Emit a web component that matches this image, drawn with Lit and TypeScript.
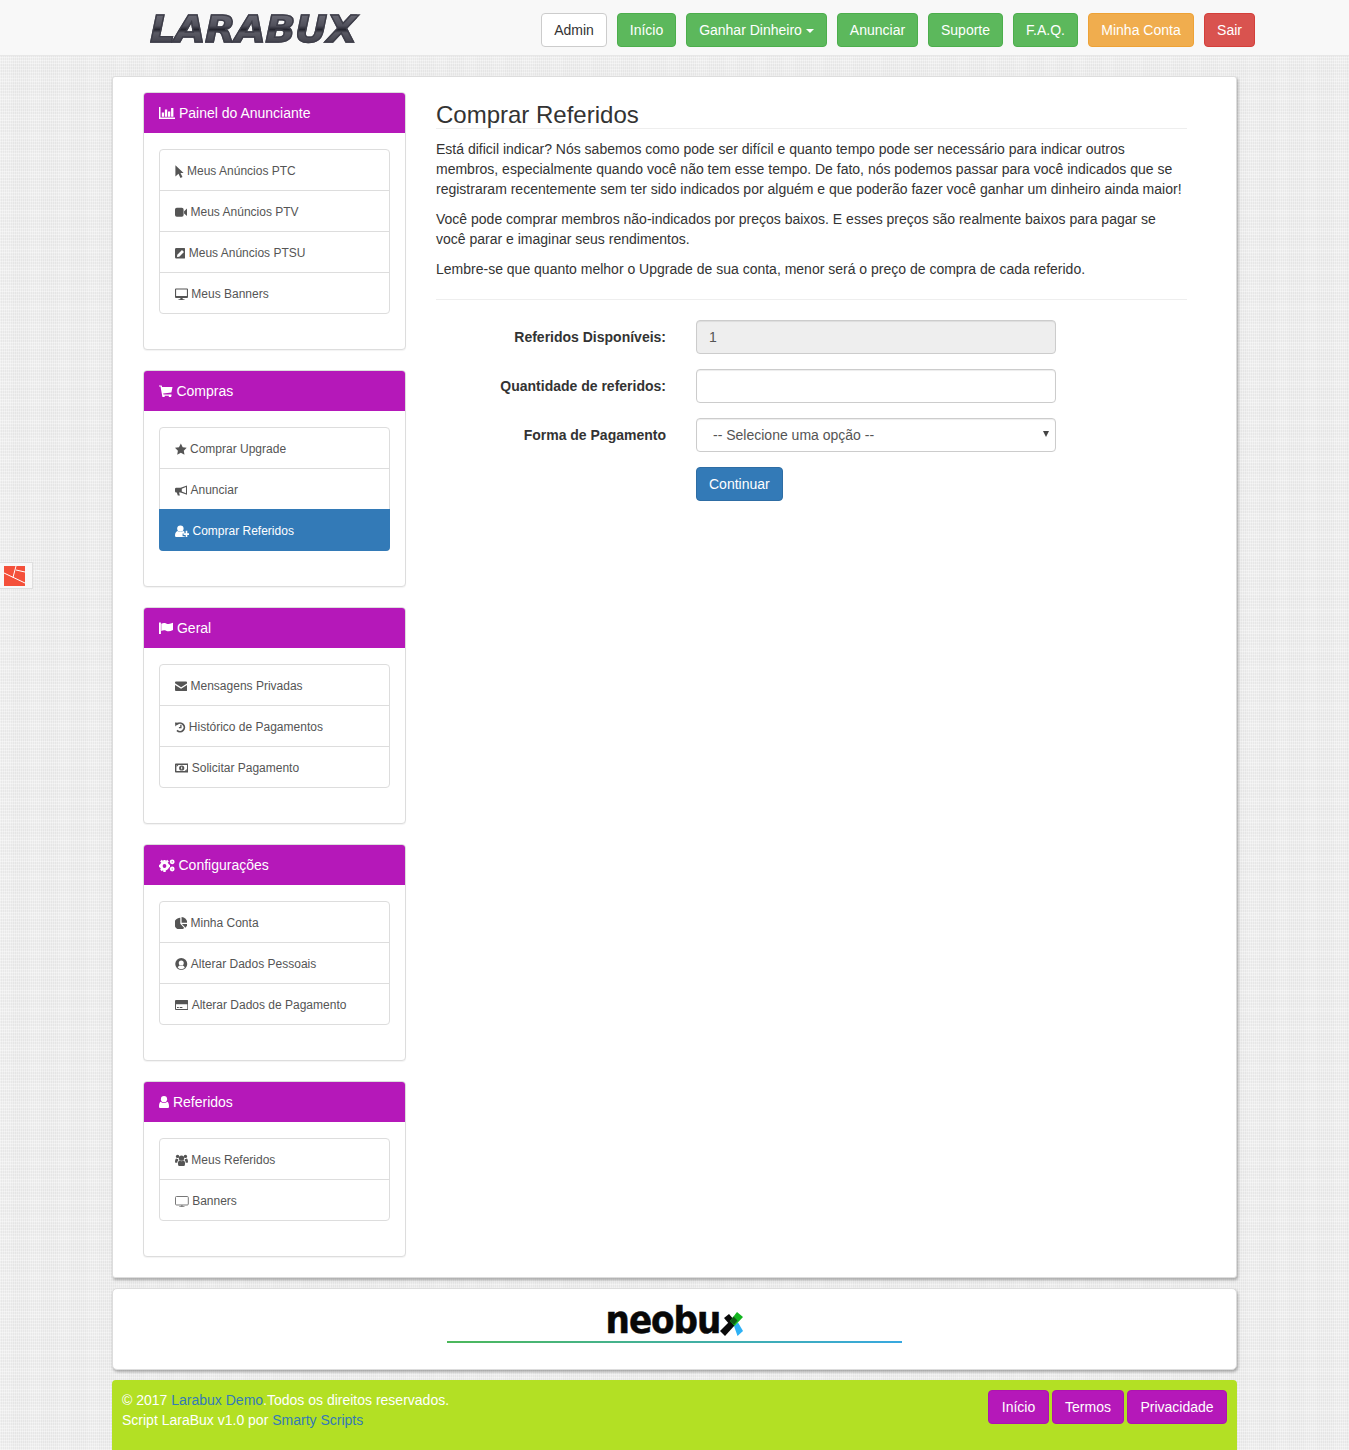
import { LitElement, html, css, svg } from "lit";
import { customElement } from "lit/decorators.js";
import { styleMap } from "lit/directives/style-map.js";

type Icon = { w: number; h: number; body: unknown };
const I = (w: number, h: number, body: unknown): Icon => ({ w, h, body });
const W = "#fff";

const icons: Record<string, Icon> = {
  chart: I(16, 12, svg`<path d="M0 0h1.500v10.500H16V12H0z"/><path d="M2.800 5.500h2.300v4.200H2.800zM5.900 2.500h2.300v7.200H5.900zM9 4.500h2.300v5.200H9zM12.100 1h2.300v8.700h-2.300z"/>`),
  cursor: I(8.700, 13, svg`<path d="M.4 .2 8.600 8H5.500L7.500 12.100 5.500 13 3.500 8.800 .4 11.600z"/>`),
  video: I(12.200, 12, svg`<path d="M0 3.500A1.800 1.800 0 0 1 1.800 1.700H6.800A1.800 1.800 0 0 1 8.600 3.500V9A1.800 1.800 0 0 1 6.800 10.800H1.800A1.800 1.800 0 0 1 0 9z"/><path d="M9.100 5.200 12.200 2.400v7.700L9.100 7.400z"/>`),
  edit: I(10.400, 12, svg`<path fill-rule="evenodd" d="M1.400 .9h7.600a1.400 1.400 0 0 1 1.400 1.400v7.900a1.400 1.400 0 0 1-1.400 1.400H1.400A1.400 1.400 0 0 1 0 10.200V2.300A1.400 1.400 0 0 1 1.400 .9zM7 3 2.300 7.700 2 10l2.300-.3L9 5z"/>`),
  desktop: I(13, 12, svg`<path fill-rule="evenodd" d="M1 .5h11a1 1 0 0 1 1 1v7.500a1 1 0 0 1-1 1H7.500l.3 1.200H9.500V12H3.500v-.8h1.700L5.500 10H1a1 1 0 0 1-1-1V1.500a1 1 0 0 1 1-1zM1.100 1.600v6.300h10.800V1.600z"/>`),
  cart: I(13.500, 12, svg`<path d="M0 .4h2.700l.4 1.500h10.400l-1.100 5.700-8.200 1 .2 .9h8.100v1.200H3.200L1.500 1.600H0z"/><circle cx="4.500" cy="11" r="1.300"/><circle cx="11" cy="11" r="1.300"/>`),
  star: I(11.700, 12, svg`<path d="M5.850 .4 7.700 4.200l4 .55-2.900 2.900.7 4.100-3.650-2-3.650 2 .7-4.100L0 4.750l4-.55z"/>`),
  horn: I(12.200, 12, svg`<path fill-rule="evenodd" d="M12 1.400 5.600 3.800H1.200A1.200 1.200 0 0 0 0 5v2.200a1.200 1.200 0 0 0 1.200 1.200h.6l1 3.200h2.100l-.9-3.200h1.600l6.400 2.300zM6.800 4.800l4.200-1.800v6.200L6.800 7.500z"/>`),
  userplus: I(14.200, 12, svg`<circle cx="5.400" cy="3.600" r="3.200"/><path d="M0 10.800C0 7.800 1.200 6.300 2.700 6c.8.700 1.700 1.100 2.700 1.100s1.900-.4 2.700-1.100c.5.100.9.300 1.300.6v1.800H7.600v2.800h2.100V12H1.200A1.200 1.200 0 0 1 0 10.800z"/><path d="M10.700 5.800h1.600v2.500h1.900v1.600h-1.900v2.100h-1.600V9.900H8.600V8.300h2.100z"/>`),
  flag: I(14.100, 12, svg`<path d="M0 .4h1.900V12H0z"/><path d="M2.300 1.800c1.500-1 3.100-1.200 4.800-.4 2 .9 4.100.8 7-.6v7.200c-2.800 1.500-5 1.700-7 .8-1.700-.7-3.200-.6-4.800.3z"/>`),
  mail: I(12.200, 12, svg`<path d="M1 1.600h10.200a1 1 0 0 1 1 1v.7L6.100 7.200 0 3.300v-.7a1 1 0 0 1 1-1z"/><path d="M0 4.900 6.100 8.800 12.200 4.900V10a1 1 0 0 1-1 1H1a1 1 0 0 1-1-1z"/>`),
  history: I(10.500, 12, svg`<path d="M0 1.600 4 1.800 .4 5.400z"/><path fill="none" stroke="#555" stroke-width="1.800" d="M2 3.300A4.300 4.300 0 1 1 2 9.400"/><path fill="none" stroke="#555" stroke-width="1.300" d="M5.900 3.800v2.900H3.900"/>`),
  money: I(13.400, 12, svg`<path fill-rule="evenodd" d="M.8 1.500h11.800a.8.8 0 0 1 .8 .8v7.400a.8.8 0 0 1-.8 .8H.8a.8.8 0 0 1-.8-.8V2.300a.8.8 0 0 1 .8-.8zM1.400 2.900v6.200h10.600V2.900zM6.700 3.400a2.600 2.600 0 1 1 0 5.200 2.600 2.600 0 0 1 0-5.200zM6.200 4.700v2.600h1V4.700z"/><path d="M1.600 3.100h1.900L1.600 5zM11.800 8.900H9.900L11.800 7z"/>`),
  cogs: I(15.600, 13, svg`<circle cx="5.500" cy="7" r="3.300" fill="none" stroke="#fff" stroke-width="2.800"/><path d="M4.300 1h2.400v2.200H4.300zM4.300 10.800h2.400V13H4.300zM0 5.800h2.200v2.400H0zM8.800 5.800H11v2.400H8.800zM1.100 2.500l1.700-1.700L4.300 2.300 2.600 4zM6.700 8.700l1.700-1.700L9.900 8.500 8.200 10.200zM1.100 10.500l1.700 1.700L4.300 10.700 2.600 9zM6.700 2.300 8.200 .8 9.900 2.500 8.400 4z"/><circle cx="13.200" cy="2.800" r="1.500" fill="none" stroke="#fff" stroke-width="1.800"/><circle cx="13.200" cy="10" r="1.500" fill="none" stroke="#fff" stroke-width="1.800"/>`),
  pie: I(12.200, 12, svg`<path d="M5.300 .8v5.900l4 4.200A5.900 5.900 0 1 1 5.300 .8z"/><path d="M6.600 0a5.600 5.600 0 0 1 5.600 5.700H6.600z"/><path d="M6.900 7h5.300a5.600 5.600 0 0 1-1.700 3.700z"/>`),
  usercircle: I(12.500, 12, svg`<path fill-rule="evenodd" d="M6.250 0a6 6 0 1 1 0 12 6 6 0 0 1 0-12zM6.250 2.500a2.500 2.500 0 1 0 0 5 2.500 2.500 0 0 0 0-5zM2.700 9.500a4.600 4.600 0 0 0 7.100 0c-.4-1-1.100-1.700-2-2a3.200 3.200 0 0 1-3.100 0c-.9.300-1.600 1-2 2z"/>`),
  card: I(13.300, 12, svg`<path fill-rule="evenodd" d="M1 1h11.300a1 1 0 0 1 1 1v8a1 1 0 0 1-1 1H1a1 1 0 0 1-1-1V2a1 1 0 0 1 1-1zM1 5.200v4.600a.2.2 0 0 0 .2.2h10.900a.2.2 0 0 0 .2-.2V5.200zM2 8.100h1.800V9H2zM4.700 8.100h2.700V9H4.700z"/>`),
  user: I(10, 12, svg`<circle cx="5" cy="3.200" r="3.100"/><path d="M1.800 5.700C.5 6.200 0 8 0 10.400 0 11.400.6 12 1.400 12h7.200c.8 0 1.400-.6 1.400-1.600 0-2.400-.5-4.200-1.800-4.700-.8.800-1.900 1.300-3.200 1.300S2.600 6.500 1.800 5.700z"/>`),
  users: I(13, 12, svg`<circle cx="6.500" cy="4.200" r="2.600"/><circle cx="2.600" cy="2.400" r="1.700"/><circle cx="10.400" cy="2.400" r="1.700"/><path d="M3.100 11c-.5-2.900.4-4.200 1.600-4.400.5.400 1.100.7 1.800.7s1.300-.3 1.800-.7c1.200.2 2.100 1.500 1.600 4.400-.1.600-.5 1-1 1H4.100c-.5 0-.9-.4-1-1z"/><path d="M3.200 6.300A3 3 0 0 0 2.300 8.800H.7C.2 8.800 0 8.500 0 8 0 6 .4 4.600 1.400 4.400c.5.400 1.100.7 1.800.7zM9.800 6.300a3 3 0 0 1 .9 2.500h1.600c.5 0 .7-.3.7-.8 0-2-.4-3.400-1.400-3.600-.5.400-1.100.7-1.800.7z"/>`),
  desktop2: I(13.800, 12, svg`<path fill="none" stroke="#777" d="M1.500 1.500h10.800a1 1 0 0 1 1 1v6.500a1 1 0 0 1-1 1H1.500a1 1 0 0 1-1-1V2.500a1 1 0 0 1 1-1z"/><path fill="#777" d="M6.300 10h1.200v1.300h2v.7H4.300v-.7h2z"/>`),
};

const ico = (name: string, color: string) => {
  const i = icons[name];
  return html`<svg class="ico" style=${styleMap({ width: i.w + "px", height: i.h + "px" })} viewBox="0 0 ${i.w} ${i.h}" fill=${color}>${i.body}</svg>`;
};

const panels = [
  { icon: "chart", title: "Painel do Anunciante", items: [["cursor", "Meus Anúncios PTC"], ["video", "Meus Anúncios PTV"], ["edit", "Meus Anúncios PTSU"], ["desktop", "Meus Banners"]] },
  { icon: "cart", title: "Compras", items: [["star", "Comprar Upgrade"], ["horn", "Anunciar"], ["userplus", "Comprar Referidos"]] },
  { icon: "flag", title: "Geral", items: [["mail", "Mensagens Privadas"], ["history", "Histórico de Pagamentos"], ["money", "Solicitar Pagamento"]] },
  { icon: "cogs", title: "Configurações", items: [["pie", "Minha Conta"], ["usercircle", "Alterar Dados Pessoais"], ["card", "Alterar Dados de Pagamento"]] },
  { icon: "user", title: "Referidos", items: [["users", "Meus Referidos"], ["desktop2", "Banners"]] },
];

const navBtns: [string, string, number][] = [
  ["Admin", "def", 66], ["Início", "green", 59], ["Ganhar Dinheiro", "green caret", 141], ["Anunciar", "green", 81],
  ["Suporte", "green", 75], ["F.A.Q.", "green", 65], ["Minha Conta", "orange", 106], ["Sair", "red", 51],
];
const footBtns: [string, number][] = [["Início", 61], ["Termos", 72], ["Privacidade", 100]];

@customElement("app-root")
export class AppRoot extends LitElement {
  static styles = css`
    :host {
      display: block;
      min-height: 1450px;
      position: relative;
      overflow: hidden;
      font-family: "Liberation Sans", Arial, sans-serif;
      font-size: 14px;
      line-height: 20px;
      color: #333;
      background-color: #e9e9e9;
      background-image:
        linear-gradient(90deg, rgba(255,255,255,.35) 50%, transparent 50%),
        linear-gradient(rgba(255,255,255,.2) 50%, rgba(0,0,0,.015) 50%),
        linear-gradient(90deg, rgba(255,255,255,.1) 40%, transparent 40%),
        linear-gradient(rgba(255,255,255,.08) 35%, transparent 35%);
      background-size: 2px 2px, 3px 3px, 29px 29px, 23px 19px;
    }
    * { box-sizing: border-box; }
    .nav {
      height: 56px;
      background: #f8f8f8;
      border-bottom: 1px solid #e7e7e7;
      display: flex;
      align-items: flex-start;
      padding: 13px 94px 0 150px;
    }
    .logo {
      font-family: "DejaVu Sans", sans-serif;
      font-weight: 700;
      font-style: italic;
      font-size: 38px;
      line-height: 32px;
      height: 32px;
      letter-spacing: -.5px;
      transform-origin: left top;
      transform: scale(1.045, 1);
      background: linear-gradient(#6d6d78 0, #50505b 40%, #24242e 52%, #5a5a64 62%, #3e3e48 100%);
      -webkit-background-clip: text;
      background-clip: text;
      color: transparent;
      -webkit-text-stroke: 1.4px #3e3e49;
    }
    .btns { margin-left: auto; display: flex; gap: 10px; }
    .btn {
      display: inline-block;
      height: 34px;
      padding: 6px 0;
      text-align: center;
      border: 1px solid transparent;
      border-radius: 4px;
      font-size: 14px;
      line-height: 20px;
      color: #fff;
      white-space: nowrap;
      text-decoration: none;
    }
    .def { background: #fff; border-color: #ccc; color: #333; }
    .green { background: #5cb85c; border-color: #4cae4c; }
    .orange { background: #f0ad4e; border-color: #eea236; }
    .red { background: #d9534f; border-color: #d43f3a; }
    .primary { background: #337ab7; border-color: #2e6da4; padding: 6px 12px; }
    .foot a.purple { background: #b518b9; border-color: #ac14b0; color: #fff; }
    .caret::after {
      content: "";
      display: inline-block;
      margin-left: 4px;
      vertical-align: middle;
      border-top: 4px solid #fff;
      border-left: 4px solid transparent;
      border-right: 4px solid transparent;
    }
    .wrap { width: 1125px; margin: 20px 0 0 112px; }
    .card {
      background: #fff;
      border: 1px solid #ddd;
      border-radius: 3px;
      box-shadow: 1px 2px 3px rgba(0,0,0,.3);
    }
    .main {
      display: flex;
      padding: 15px 49px 0 30px;
      gap: 30px;
    }
    .side { width: 263px; flex: none; }
    .panel {
      border: 1px solid #ddd;
      border-radius: 4px;
      margin-bottom: 20px;
      background: #fff;
      box-shadow: 0 1px 1px rgba(0,0,0,.05);
    }
    .ph {
      height: 41px;
      padding: 10px 15px;
      background: #b518b9;
      border-bottom: 1px solid #fff;
      border-radius: 3px 3px 0 0;
      color: #fff;
      display: flex;
      align-items: center;
      white-space: pre;
    }
    .ph .ico { margin-right: 3.9px; flex: none; }
    .pb { padding: 15px 15px 35px; }
    .list {
      border: 1px solid #ddd;
      border-radius: 4px;
    }
    .li {
      height: 41px;
      padding: 2px 15px 0;
      font-size: 12px;
      color: #555;
      display: flex;
      align-items: center;
      border-top: 1px solid #ddd;
    }
    .li:first-child { border-top: 0; height: 40px; }
    .li .ico { margin-right: 3.33px; flex: none; }
    .li.active {
      background: #337ab7;
      color: #fff;
      margin: 0 -1px -1px;
      padding: 0 16px;
      height: 42px;
      border-top: 1px solid #337ab7;
      border-radius: 0 0 4px 4px;
      position: relative;
    }
    .content { flex: 1; min-width: 0; }
    h3 {
      margin: 10px 0 10px;
      font-size: 24px;
      line-height: 26px;
      font-weight: 400;
      border-bottom: 1px solid #eee;
      height: 27px;
    }
    p { margin: 0 0 10px; }
    hr { border: 0; border-top: 1px solid #eee; margin: 20px 0; }
    .row { display: flex; align-items: center; margin-bottom: 15px; height: 34px; }
    label { width: 230px; text-align: right; font-weight: 700; margin-right: 30px; }
    .ctl {
      display: block;
      width: 360px;
      height: 34px;
      padding: 6px 12px;
      border: 1px solid #ccc;
      border-radius: 4px;
      background: #fff;
      color: #555;
      font: 14px/20px "Liberation Sans", Arial, sans-serif;
      box-shadow: inset 0 1px 1px rgba(0,0,0,.075);
    }
    .ctl[disabled] { background: #eee; opacity: 1; color: #555; }
    .selbox { position: relative; width: 360px; }
    select.ctl { appearance: none; -webkit-appearance: none; padding-left: 16px; }
    .arrow {
      position: absolute;
      right: 7px;
      top: 13px;
      width: 0;
      height: 0;
      border-top: 6px solid #444;
      border-left: 3px solid transparent;
      border-right: 3px solid transparent;
    }
    .off { margin-left: 260px; }
    .ad {
      margin-top: 10px;
      height: 82px;
      border-radius: 5px;
      display: flex;
      justify-content: center;
      padding: 6px 0 0 0;
    }
    .adin { width: 455px; }
    .adlogo {
      height: 40px;
      display: flex;
      align-items: flex-end;
      justify-content: center;
    }
    .adlogo span {
      font-family: "DejaVu Sans Condensed", "DejaVu Sans", sans-serif;
      font-stretch: condensed;
      font-weight: 700;
      font-size: 38px;
      line-height: 40px;
      color: #080808;
      letter-spacing: -1px;
      margin: 0 0 -5px 0;
      -webkit-text-stroke: .5px #080808;
    }
    .adlogo svg { width: 23px; height: 24px; margin: 0 0 -1px 0; flex: none; }
    .adline { height: 2px; margin-top: 6px; background: linear-gradient(90deg, #4cb85a, #38a8e0); }
    .foot {
      margin-top: 10px;
      height: 70px;
      background: #b3e024;
      border-radius: 4px 4px 0 0;
      padding: 10px;
      display: flex;
      justify-content: space-between;
      color: #fff;
    }
    .foot .lnk { color: #337ab7; }
    .foot .fb { display: flex; gap: 3px; }
    .widget {
      position: absolute;
      left: 0;
      top: 562px;
      width: 33px;
      height: 27px;
      background: #f8f8f8;
      border: 1px solid #dfdfdf;
      border-left: 0;
      padding: 3px 0 0 4px;
    }
    .widget svg { display: block; width: 21px; height: 20px; }
  `;

  render() {
    return html`
      <div class="nav">
        <div class="logo">LARABUX</div>
        <div class="btns">
          ${navBtns.map(([t, c, w]) => html`<a class="btn ${c}" style=${styleMap({ width: w + "px" })}>${t}</a>`)}
        </div>
      </div>

      <div class="widget">
        <svg viewBox="0 0 21 20">
          <path fill="#f4503a" d="M0 0h21v20H0z"/>
          <path fill="none" stroke="#fff" stroke-width="1" d="M0 7 21 17M12 0 9 11.500M12 4 21 6"/>
        </svg>
      </div>

      <div class="wrap">
        <div class="card main">
          <div class="side">
            ${panels.map((p) => html`
              <div class="panel">
                <div class="ph">${ico(p.icon, W)}${p.title}</div>
                <div class="pb">
                  <div class="list">
                    ${p.items.map(([ic, t]) => {
                      const act = t === "Comprar Referidos";
                      return html`<div class="li ${act ? "active" : ""}">${ico(ic, act ? W : "#555")}<span>${t}</span></div>`;
                    })}
                  </div>
                </div>
              </div>`)}
          </div>
          <div class="content">
            <h3>Comprar Referidos</h3>
            <p>Está dificil indicar? Nós sabemos como pode ser difícil e quanto tempo pode ser necessário para indicar outros membros, especialmente quando você não tem esse tempo. De fato, nós podemos passar para você indicados que se registraram recentemente sem ter sido indicados por alguém e que poderão fazer você ganhar um dinheiro ainda maior!</p>
            <p>Você pode comprar membros não-indicados por preços baixos. E esses preços são realmente baixos para pagar se você parar e imaginar seus rendimentos.</p>
            <p>Lembre-se que quanto melhor o Upgrade de sua conta, menor será o preço de compra de cada referido.</p>
            <hr />
            <div class="row"><label>Referidos Disponíveis:</label><input class="ctl" disabled value="1" /></div>
            <div class="row"><label>Quantidade de referidos:</label><input class="ctl" /></div>
            <div class="row"><label>Forma de Pagamento</label>
              <div class="selbox">
                <select class="ctl"><option>-- Selecione uma opção --</option></select>
                <i class="arrow"></i>
              </div>
            </div>
            <div class="off"><a class="btn primary">Continuar</a></div>
          </div>
        </div>

        <div class="card ad">
          <div class="adin">
            <div class="adlogo">
              <span>neobu</span>
              <svg viewBox="0 0 23 24">
                <path fill="#0a0a0a" d="M4 6 9 2 15 9 10 13z"/>
                <path fill="#0a0a0a" d="M0 19 11 8 15 13 5 24z"/>
                <path fill="#2db1f5" d="M14 14 18 10.500 23 19 17.500 24z"/>
                <path fill="#12b51e" d="M10 9 17 0 23 5 14.500 14z"/>
                <path fill="#0d5a14" d="M10 9 13.500 4.500 17.500 8.500 14 12.500z"/>
              </svg>
            </div>
            <div class="adline"></div>
          </div>
        </div>

        <div class="foot">
          <div>
            © 2017 <span class="lnk">Larabux Demo</span>.Todos os direitos reservados.<br />
            Script LaraBux v1.0 por <span class="lnk">Smarty Scripts</span>
          </div>
          <div class="fb">
            ${footBtns.map(([t, w]) => html`<a class="btn purple" style=${styleMap({ width: w + "px" })}>${t}</a>`)}
          </div>
        </div>
      </div>
    `;
  }
}
